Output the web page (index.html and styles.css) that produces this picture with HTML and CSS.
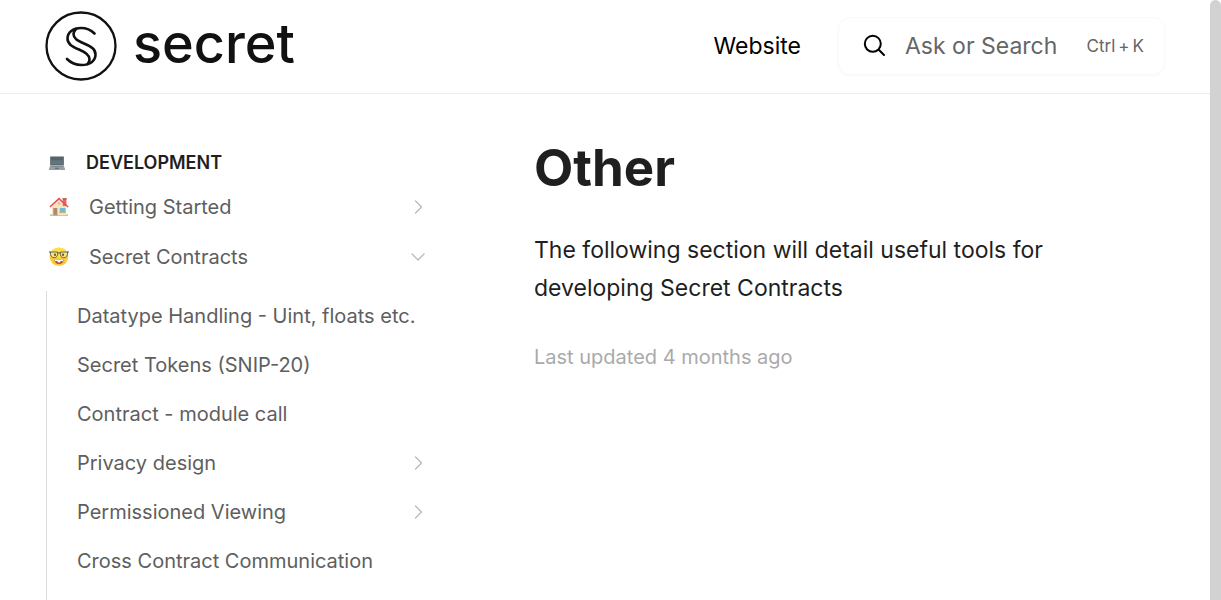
FILE: index.html
```html
<!DOCTYPE html>
<html lang="en">
<head>
<meta charset="utf-8">
<meta name="viewport" content="width=device-width, initial-scale=1">
<title>Other - Secret</title>
<link rel="stylesheet" href="styles.css">
</head>
<body>
<div class="page">
  <header class="header">
    <a class="logo" href="#">
      <svg class="logo-mark" viewBox="0 0 72 72" fill="none" stroke="currentColor" stroke-linecap="round" aria-hidden="true">
        <ellipse cx="36" cy="36" rx="34.5" ry="33.5" stroke-width="2.3"/>
        <g stroke-width="2.6">
          <path d="M49.5 23.500 C46 20 41 18 36 18 C28 18 22.500 22.500 22.500 28.500 C22.500 34 27 36.500 34 39.500 C41 42.500 44.500 45 44.500 49 C44.500 51 44 53 42.500 54"/>
          <path d="M22 49 C26 53 31 55 36.500 55 C45 55 50.500 51 50.500 44.500 C50.500 39 46 36.500 39 33.500 C32 30.500 28.500 28.500 28.500 24 C28.500 22 29.500 20.500 31 19"/>
        </g>
      </svg>
      <span class="logo-name">secret</span>
    </a>
    <nav class="tools">
      <a class="site-link" href="#">Website</a>
      <button class="search" type="button">
        <svg class="search-icon" viewBox="0 0 24 24" fill="none" stroke="currentColor" stroke-width="2" stroke-linecap="round" aria-hidden="true">
          <circle cx="9.800" cy="9.800" r="8"/>
          <path d="M15.800 15.800 L21 21"/>
        </svg>
        <span class="search-label">Ask or Search</span>
        <kbd class="shortcut"><span>Ctrl</span><span>+</span><span>K</span></kbd>
      </button>
    </nav>
  </header>
  <div class="columns">
    <nav class="sidebar" aria-label="Documentation">
      <h2 class="section-title">
        <svg class="laptop" viewBox="0 0 16 16" aria-hidden="true">
          <path d="M1.200 1.500h13.600v9H1.200z" fill="#50585d"/>
          <path d="M2 2.200h12v7.500H2z" fill="#62747c"/>
          <path d="M2 2.200h12v3H2z" fill="#54646d"/>
          <path d="M1.200 10.500h13.600L16 14H0z" fill="#a0a7ab"/>
          <path d="M2 11h12l.5 1.300h-13z" fill="#858d92"/>
          <path d="M0 13.800h16v1H0z" fill="#7c858a"/>
          <path d="M6 12.700h4v1.300H6z" fill="#687279"/>
        </svg>
        Development
      </h2>
      <ul class="menu">
        <li><a class="item" href="#">
          <svg class="emoji" viewBox="0 0 20 20" aria-hidden="true">
            <path d="M1 17.300h18v1.500H1z" fill="#a9cc78"/>
            <path d="M3 9.500 10 3l7 6.500v8.500H3z" fill="#f7e3c2"/>
            <path d="M13.800 2h3.600v7h-3.600z" fill="#e66760"/>
            <path d="M13.400 1.200h4.400v1.200h-4.400z" fill="#9c4b42"/>
            <path d="M10 .4 19.600 9.500l-1 1.100L10 2.800l-8.600 7.800-1-1.100z" fill="#ef4b50"/>
            <path d="M4.300 11h4v7h-4z" fill="#b08a70"/>
            <path d="M10.800 11h5.700v4h-5.700z" fill="#68bfd4"/>
            <path d="M10.300 15h6.700v1h-6.700z" fill="#cfac84"/>
            <path d="M3.800 17.800h5v1h-5z" fill="#b5aea5"/>
            <circle cx="10" cy="6.500" r="1.200" fill="#dfb888"/>
          </svg>
          <span class="item-name">Getting Started</span>
          <svg class="chevron" viewBox="0 0 16 16" fill="none" stroke="currentColor" stroke-width="1.400" stroke-linecap="round" stroke-linejoin="round" aria-hidden="true"><path d="M5.500 2 11.500 8 5.500 14"/></svg>
        </a></li>
        <li><a class="item" href="#">
          <svg class="emoji" viewBox="0 0 20 20" aria-hidden="true">
            <circle cx="10" cy="9.700" r="9.300" fill="#fcc934"/>
            <ellipse cx="10" cy="6" rx="7.500" ry="5" fill="#fede4b"/>
            <path d="M5.500 13h9c-.3 2.700-2 4-4.500 4s-4.200-1.300-4.500-4z" fill="#8a4d2b"/>
            <path d="M6 13h8v1.200H6z" fill="#fff"/>
            <path d="M7.800 15.800c1.500-.9 2.900-.9 4.400 0-1.300.8-3.100.8-4.400 0z" fill="#f05b5b"/>
            <path d="M8.600 14h2.800v1.300H8.600z" fill="#fff"/>
            <path d="M1.300 5h7.200c.6 3.700-.6 5.700-3.300 5.700S1.200 8.500 1.300 5zM11.500 5h7.200c.1 3.500-1.200 5.700-3.900 5.700S10.900 8.700 11.500 5z" fill="#f5e38a" stroke="#5c5c48" stroke-width=".9"/>
            <path d="M0 5h2M18 5h2M8.500 6.200q1.500-.8 3 0" fill="none" stroke="#5c5c48" stroke-width="1.100"/>
            <ellipse cx="6" cy="7.800" rx="1" ry="1.200" fill="#6b4a2b"/>
            <ellipse cx="14" cy="7.800" rx="1" ry="1.200" fill="#6b4a2b"/>
          </svg>
          <span class="item-name">Secret Contracts</span>
          <svg class="chevron" viewBox="0 0 16 16" fill="none" stroke="currentColor" stroke-width="1.400" stroke-linecap="round" stroke-linejoin="round" aria-hidden="true"><path d="M2 5 8 11 14 5"/></svg>
        </a></li>
      </ul>
      <ul class="submenu">
        <li><a class="subitem" href="#">Datatype Handling - Uint, floats etc.</a></li>
        <li><a class="subitem" href="#">Secret Tokens (SNIP-20)</a></li>
        <li><a class="subitem" href="#">Contract - module call</a></li>
        <li><a class="subitem" href="#">Privacy design
          <svg class="chevron" viewBox="0 0 16 16" fill="none" stroke="currentColor" stroke-width="1.400" stroke-linecap="round" stroke-linejoin="round" aria-hidden="true"><path d="M5.500 2 11.500 8 5.500 14"/></svg></a></li>
        <li><a class="subitem" href="#">Permissioned Viewing
          <svg class="chevron" viewBox="0 0 16 16" fill="none" stroke="currentColor" stroke-width="1.400" stroke-linecap="round" stroke-linejoin="round" aria-hidden="true"><path d="M5.500 2 11.500 8 5.500 14"/></svg></a></li>
        <li><a class="subitem" href="#">Cross Contract Communication</a></li>
      </ul>
    </nav>
    <main class="content">
      <h1 class="title">Other</h1>
      <p class="intro">The following section will detail useful tools for developing Secret Contracts</p>
      <p class="updated">Last updated 4 months ago</p>
    </main>
  </div>
</div>
<div class="scroll-thumb"></div>
</body>
</html>
```
FILE: styles.css
```css
* { box-sizing: border-box; }

body {
  margin: 0;
  overflow: hidden;
  background: #fff;
  color: #1f1f1f;
  font-family: Inter, "Liberation Sans", sans-serif;
}

a { color: inherit; text-decoration: none; }
ul { list-style: none; margin: 0; padding: 0; }
svg { display: block; flex: none; }

.page {
  display: flex;
  flex-direction: column;
  height: 100vh;
  margin-right: 11px;
}

.header {
  display: flex;
  flex: none;
  align-items: center;
  justify-content: space-between;
  height: 94px;
  padding: 0 45px 1px;
  border-bottom: 1px solid #eee;
}

.logo { display: flex; align-items: center; gap: 16px; color: #111; }
.logo-mark { width: 72px; height: 72px; }
.logo-name {
  padding-bottom: 4px;
  font-size: 54px;
  font-weight: 500;
  line-height: 66px;
}

.tools { display: flex; align-items: center; gap: 37px; }
.site-link { color: #000; font-size: 23px; line-height: 36px; }

.search {
  display: flex;
  align-items: center;
  width: 327px;
  height: 58px;
  padding: 0 20px 0 24px;
  border: 1px solid #fafafa;
  border-radius: 12px;
  background: #fff;
  box-shadow: 0 1px 2px #00000008;
  color: #666;
  font: inherit;
}
.search-icon { width: 24px; height: 24px; margin-right: 18px; color: #000; }
.search-label { flex: 1; text-align: left; font-size: 23px; white-space: nowrap; }
.shortcut { display: flex; gap: 3px; font: inherit; font-size: 17px; white-space: nowrap; }

.columns { display: flex; flex: 1; min-height: 0; padding: 0 45px 0 46px; gap: 104px; }

.sidebar {
  display: flex;
  flex: none;
  flex-direction: column;
  width: 384px;
  padding-top: 55px;
  color: #5e5e5e;
  font-size: 20px;
}

.section-title {
  display: flex;
  align-items: center;
  gap: 21px;
  margin: 0;
  padding-left: 3px;
  color: #1f1f1f;
  font-size: 18px;
  font-weight: 600;
  line-height: 28px;
  text-transform: uppercase;
}
.laptop { width: 16px; height: 16px; }

.menu { padding: 5px 0 9px; }
.item { display: flex; align-items: center; height: 50px; padding: 0 4px 0 3px; gap: 20px; }
.emoji { width: 20px; height: 20px; }
.item-name { flex: 1; }
.chevron { width: 16px; height: 16px; color: #bbb; }

.submenu { flex: 1; border-left: 1px solid #ddd; }
.subitem {
  display: flex;
  align-items: center;
  justify-content: space-between;
  height: 49px;
  padding: 0 4px 0 30px;
  white-space: nowrap;
}

.content { flex: 1; min-width: 0; padding-top: 42px; }
.title { margin: 0; font-size: 51px; font-weight: 700; line-height: 64px; }
.intro { margin: 31px 0 0; font-size: 23px; line-height: 38px; }
.updated { margin: 34px 0 0; color: #aaa; font-size: 20px; line-height: 32px; }

.scroll-thumb {
  position: fixed;
  inset: 0 0 0 auto;
  width: 11px;
  border-radius: 6px 6px 0 0;
  background: #d2d2d2;
}
```
